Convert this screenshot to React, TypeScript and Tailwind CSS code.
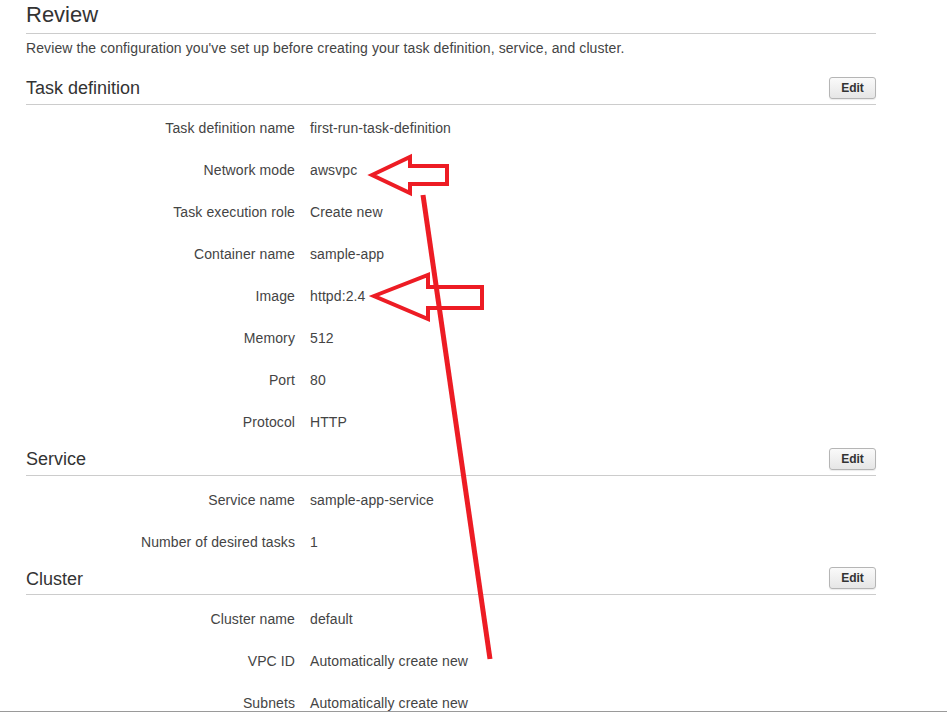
import React from "react";

type Row = { label: string; value: string };

const SECTIONS: { title: string; rows: Row[]; tall: boolean; first: boolean }[] = [
  {
    title: "Task definition",
    tall: true,
    first: true,
    rows: [
      { label: "Task definition name", value: "first-run-task-definition" },
      { label: "Network mode", value: "awsvpc" },
      { label: "Task execution role", value: "Create new" },
      { label: "Container name", value: "sample-app" },
      { label: "Image", value: "httpd:2.4" },
      { label: "Memory", value: "512" },
      { label: "Port", value: "80" },
      { label: "Protocol", value: "HTTP" },
    ],
  },
  {
    title: "Service",
    tall: true,
    first: false,
    rows: [
      { label: "Service name", value: "sample-app-service" },
      { label: "Number of desired tasks", value: "1" },
    ],
  },
  {
    title: "Cluster",
    tall: false,
    first: false,
    rows: [
      { label: "Cluster name", value: "default" },
      { label: "VPC ID", value: "Automatically create new" },
      { label: "Subnets", value: "Automatically create new" },
    ],
  },
];

function Section({
  title,
  rows,
  tall,
  first,
}: {
  title: string;
  rows: Row[];
  tall: boolean;
  first: boolean;
}) {
  return (
    <section>
      {/* Section header */}
      <div
        className={
          "flex items-center justify-between border-b border-[#cccccc] " +
          (tall ? "h-[33px]" : "h-[32px]")
        }
      >
        <h2 className="text-[18px] leading-[24px] text-[#333333]">{title}</h2>
        <button className="h-[22px] w-[47px] mb-[1px] rounded-[3px] border border-[#b5b5b5] bg-gradient-to-b from-[#fafafa] to-[#e6e6e6] text-[12px] font-bold text-[#333333] shadow-[0_1px_1px_rgba(0,0,0,0.08)]">
          Edit
        </button>
      </div>
      <div className={first ? "mt-[2px]" : "mt-[3px]"}>
        {rows.map((row) => (
          <div
            key={row.label}
            className="flex items-center h-[42px] text-[14px] tracking-[0.1px]"
          >
            <div className="w-[269px] text-right text-[#444444]">{row.label}</div>
            <div className="ml-[15px] text-[#444444]">{row.value}</div>
          </div>
        ))}
      </div>
    </section>
  );
}

export default function App() {
  return (
    <div
      className="relative min-h-screen bg-white overflow-hidden"
      style={{ fontFamily: '"Liberation Sans", Arial, sans-serif' }}
    >
      <main className="ml-[26px] w-[850px] pt-[2px]">
        <header className="border-b border-[#cccccc] pb-[5px]">
          <h1 className="text-[22px] leading-[26px] text-[#333333]">Review</h1>
        </header>
        <p className="mt-[4px] text-[14px] leading-[20px] tracking-[0.1px] text-[#444444]">
          Review the configuration you've set up before creating your task definition, service, and cluster.
        </p>
        <div className="mt-[14px]">
          {SECTIONS.map((s) => (
            <Section key={s.title} title={s.title} rows={s.rows} tall={s.tall} first={s.first} />
          ))}
        </div>
      </main>

      {/* hand-drawn annotation */}
      <svg
        className="absolute left-0 top-0 pointer-events-none"
        width="947"
        height="713"
        viewBox="0 0 947 713"
        fill="none"
        stroke="#ed1c24"
        strokeWidth="4"
        strokeLinejoin="miter"
      >
        <polygon points="372,175 410,157 410,166 447,166 447,184 410,184 410,193" />
        <polygon points="374,296 428,275 428,287 482,287 482,308 428,308 428,319" />
        <line x1="423" y1="195" x2="490" y2="659" strokeWidth="5" />
      </svg>

      <div className="fixed left-0 right-0 bottom-[1px] h-px bg-[#9a9a9a]" />
    </div>
  );
}
